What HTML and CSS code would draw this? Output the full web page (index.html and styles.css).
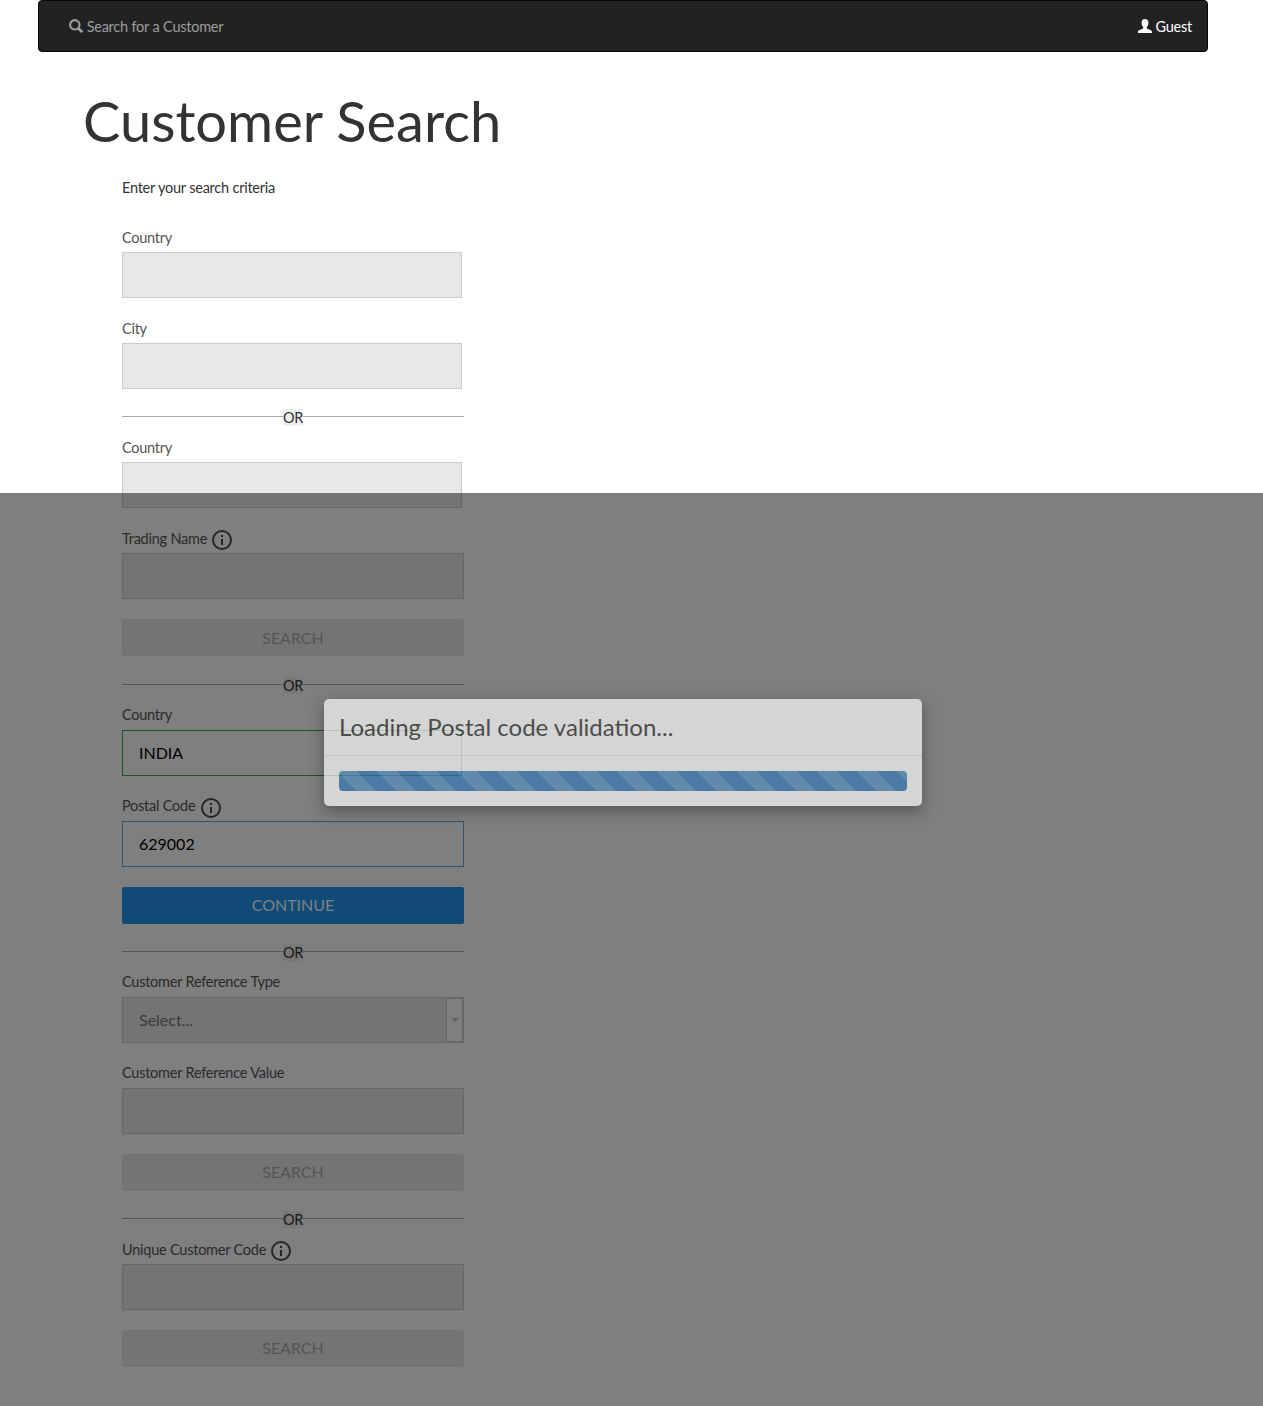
FILE: index.html
```
<!DOCTYPE html>
<html lang="en">
<head>
<meta charset="utf-8">
<title>Customer Search</title>
<link rel="stylesheet" href="styles.css">
</head>
<body>
<svg class="sprite" aria-hidden="true">
  <symbol id="info" viewBox="0 0 20 20">
    <circle cx="10" cy="10" r="9" fill="none" stroke="currentColor" stroke-width="2"/>
    <path d="M9 5h2v2H9zM9 9h2v6H9z" fill="currentColor"/>
  </symbol>
</svg>
<nav class="navbar">
  <a class="nav-link"><svg class="glyph" viewBox="0 0 14 14"><circle cx="5.8" cy="5.8" r="4.7" fill="none" stroke="currentColor" stroke-width="2.1"/><path d="M9 9l4.200 4.200" stroke="currentColor" stroke-width="2.700"/></svg><span>Search for a Customer</span></a>
  <a class="nav-link user"><svg class="glyph" viewBox="0 0 14 14"><path d="M7 0C4.800 0 3.600 1.400 3.600 3.600c0 2 .7 3.500 1.600 4.600v1.300C4.800 10.300 0 10.800 0 12.700V14h14v-1.300c0-1.900-4.800-2.400-5.200-3.200V8.200c.9-1.100 1.600-2.600 1.600-4.600C10.400 1.400 9.200 0 7 0z" fill="currentColor"/></svg><span>Guest</span></a>
</nav>
<main class="page">
  <h1>Customer Search</h1>
  <div class="criteria">
    <p class="intro">Enter your search criteria</p>
    <div class="field"><label>Country</label><div class="input short"></div></div>
    <div class="field"><label>City</label><div class="input short"></div></div>
    <div class="divider first"><span>OR</span></div>
    <div class="field"><label>Country</label><div class="input short"></div></div>
    <div class="field"><label>Trading Name<svg class="info"><use href="#info"/></svg></label><div class="input"></div></div>
    <button class="btn" disabled>SEARCH</button>
    <div class="divider"><span>OR</span></div>
    <div class="field"><label>Country</label><div class="input short valid">INDIA</div></div>
    <div class="field"><label>Postal Code<svg class="info low"><use href="#info"/></svg></label><div class="input focus">629002</div></div>
    <button class="btn primary">CONTINUE</button>
    <div class="divider grey"><span>OR</span></div>
    <div class="field"><label>Customer Reference Type</label><div class="input select">Select...<span class="arrow"></span></div></div>
    <div class="field"><label>Customer Reference Value</label><div class="input"></div></div>
    <button class="btn" disabled>SEARCH</button>
    <div class="divider grey"><span>OR</span></div>
    <div class="field"><label>Unique Customer Code<svg class="info"><use href="#info"/></svg></label><div class="input"></div></div>
    <button class="btn last" disabled>SEARCH</button>
  </div>
</main>
<div class="backdrop"></div>
<div class="modal">
  <div class="modal-header">Loading Postal code validation...</div>
  <div class="modal-body"><div class="progress"></div></div>
</div>
</body>
</html>
```
FILE: styles.css
```
* { box-sizing: border-box; }
body {
  position: relative;
  height: 1406px;
  margin: 0;
  overflow: hidden;
  background: #fff;
  color: #333;
  font: 14.5px/20px Lato, sans-serif;
  letter-spacing: -.25px;
  word-spacing: .2px;
}
.sprite { display: none; }
.navbar {
  display: flex;
  justify-content: space-between;
  width: 1170px;
  height: 52px;
  margin-left: 38px;
  padding: 16px 15px 14px 30px;
  border: 1px solid #080808;
  border-radius: 4px;
  background: #222;
}
.nav-link {
  display: flex;
  gap: 3.7px;
  color: #9d9d9d;
}
.nav-link.user { color: #fff; }
.glyph { width: 14px; height: 14px; margin-top: 2px; }
.page { padding-left: 83px; }
h1 {
  margin: 38px 0 0;
  font-size: 56px;
  font-weight: 400;
  letter-spacing: 0;
  word-spacing: 0;
  line-height: 62px;
}
.criteria { width: 342px; margin-left: 39px; }
.intro { margin: 26px 0 29.3px; }
.field { height: 91px; }
.field label {
  display: flex;
  height: 25px;
  padding-top: .3px;
  color: #555;
  line-height: 19px;
  white-space: nowrap;
}
.info {
  width: 20px;
  height: 20px;
  margin: 1.4px 0 0 5px;
  color: #4a4a4a;
}
.info.low { margin-top: 2.1px; margin-left: 6px; }
.input {
  height: 46px;
  padding: 10px 16px;
  border: 1px solid #ccc;
  background: #e8e8e8;
  color: #000;
  font-size: 16px;
  letter-spacing: 0;
  line-height: 23px;
}
.input.short { width: 340px; }
.input.valid { border-color: #3fa845; background: #fff; }
.input.focus { border-color: #66a4d9; background: #fff; }
.input.select {
  display: flex;
  justify-content: space-between;
  padding: 0 0 0 16px;
  color: #777;
  line-height: 44px;
}
.arrow {
  display: flex;
  align-items: center;
  justify-content: center;
  width: 17px;
  border: 1px solid #ccc;
  background: #fff;
}
.arrow::before {
  content: "";
  border: 4px solid transparent;
  border-top-color: #c4c4c4;
  border-bottom: 0;
}
.btn {
  display: block;
  width: 100%;
  height: 36.86px;
  padding: 0 0 1px;
  border: 0;
  border-radius: 2px;
  background: #e8e8e8;
  color: #aaa;
  font: 16px/23px Lato, sans-serif;
  letter-spacing: 0;
}
.btn.last { padding-bottom: 2px; }
.btn.primary { background: #2196ef; color: #fff; }
.divider {
  display: flex;
  align-items: flex-start;
  height: 48.5px;
  padding-top: 20.5px;
  line-height: 17px;
}
.divider.first { height: 28px; padding-top: 0; }
.divider::before, .divider::after {
  content: "";
  flex: 1;
  height: 1px;
  margin-top: 7px;
  background: #b3a9a9;
}
.divider.grey::before, .divider.grey::after { background: #aaa; }
.divider span { background: #f0f0f0; }
.backdrop {
  position: absolute;
  inset: 493px 0 0;
  background: rgba(0, 0, 0, .5);
}
.modal {
  position: absolute;
  top: 699px;
  left: 324px;
  width: 598px;
  height: 107px;
  border-radius: 5px;
  background: #fff;
  box-shadow: 0 5px 15px rgba(0, 0, 0, .5);
  letter-spacing: 0;
  word-spacing: 0;
  opacity: .67;
}
.modal-header {
  height: 57px;
  padding: 15px;
  border-bottom: 1px solid #e5e5e5;
  font-size: 24px;
  line-height: 26px;
}
.modal-body { padding: 15px; }
.progress {
  height: 20px;
  border-radius: 4px;
  background: #337ab7 linear-gradient(45deg, rgba(255,255,255,.15) 25%, transparent 25%, transparent 50%, rgba(255,255,255,.15) 50%, rgba(255,255,255,.15) 75%, transparent 75%) -2px 0 / 40px 40px;
}
```
